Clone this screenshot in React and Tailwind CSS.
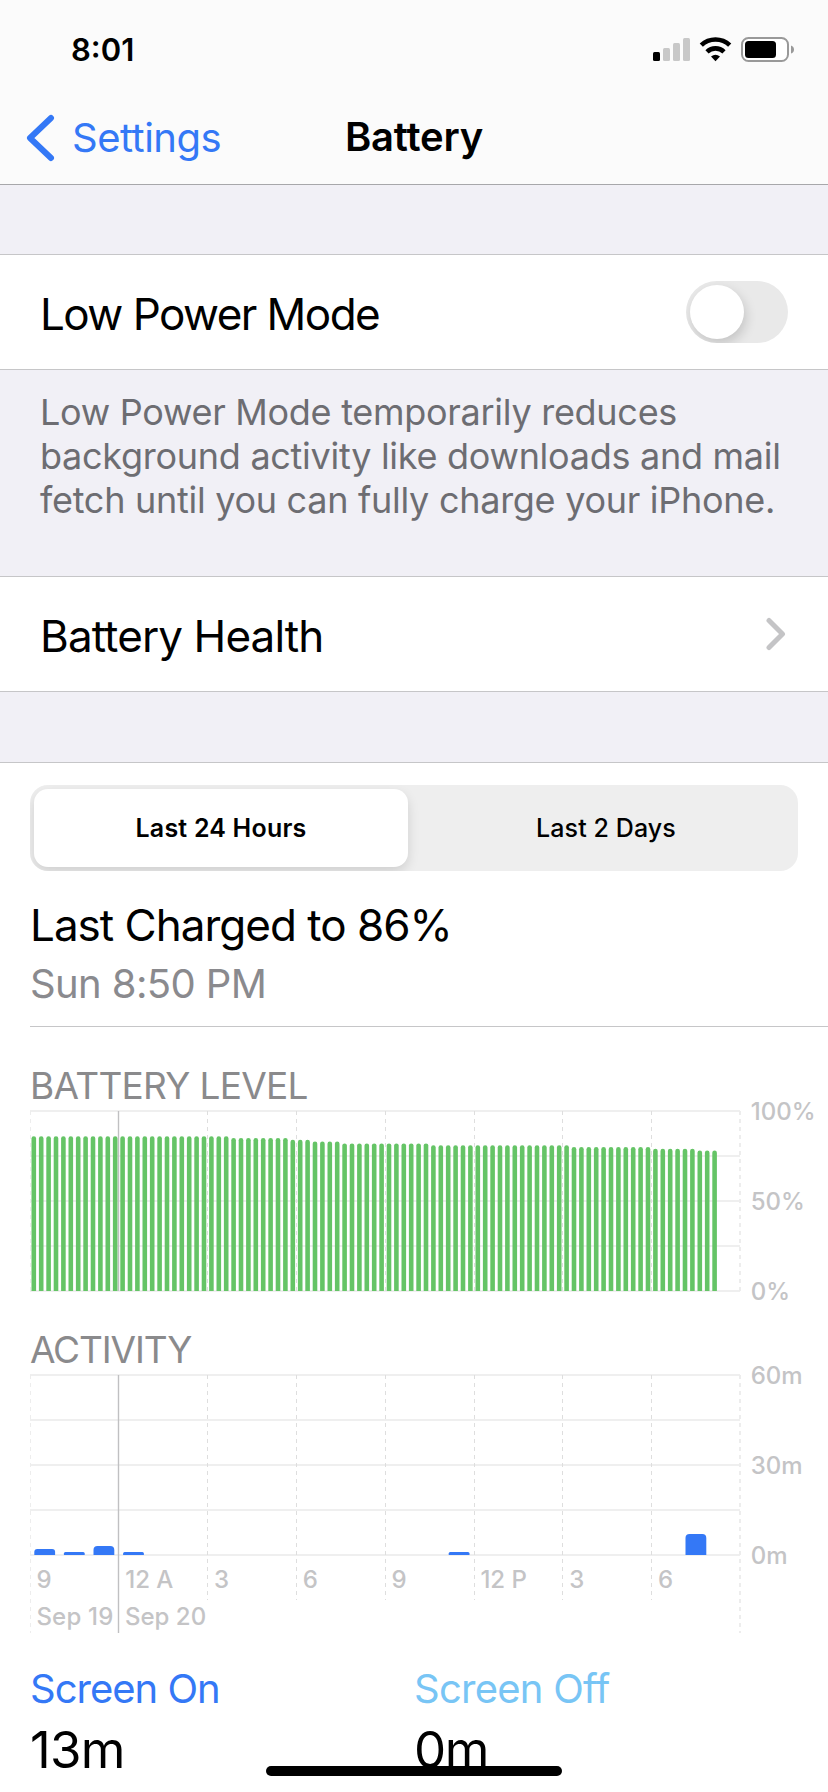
const LEFT = 30
const HOUR3 = 88.8
const BAR_STEP = 7.4

// [level, how many quarter-hour samples in a row]
const levels = [
  [86, 27],
  [85, 8],
  [84, 3],
  [83, 4],
  [82, 12],
  [81, 19],
  [80, 11],
  [79, 6],
  [78, 3],
].flatMap(([level, count]) => Array(count).fill(level))

// minutes of screen time by hour slot
const activity = [
  { hour: 0, minutes: 2 },
  { hour: 1, minutes: 1 },
  { hour: 2, minutes: 3 },
  { hour: 3, minutes: 1 },
  { hour: 14, minutes: 1 },
  { hour: 22, minutes: 7 },
]

const hours = ['9', '12 A', '3', '6', '9', '12 P', '3', '6']

function StatusBar() {
  return (
    <div className="flex h-[92px] items-center justify-between pl-[71px] pr-[33px] pt-2">
      <span className="pb-[2px] text-[31px] font-semibold leading-none">8:01</span>
      <svg width="142" height="28" viewBox="0 0 142 28">
        <rect x="0" y="16" width="7" height="9" rx="1.5" />
        <g fill="#c8c8c8">
          <rect x="10" y="12" width="7" height="13" rx="1.5" />
          <rect x="20" y="7" width="7" height="18" rx="1.5" />
          <rect x="30" y="2" width="7" height="23" rx="1.5" />
        </g>
        <g fill="none" stroke="#000" strokeWidth="4.6">
          <path d="M48.3 9.2 A20.5 20.5 0 0 1 76.7 9.2" />
          <path d="M54 15.8 A12.3 12.3 0 0 1 71 15.8" />
        </g>
        <path d="M58 20.6 Q62.5 16.8 67 20.6 L62.5 25.2 Z" />
        <rect x="89" y="2" width="46" height="23" rx="6.5" fill="#fff" stroke="#999" strokeWidth="2" />
        <rect x="92" y="5" width="31" height="17" rx="3.5" />
        <path d="M138 9.5 Q141 10.5 141 13.5 Q141 16.5 138 17.5 Z" fill="#999" />
      </svg>
    </div>
  )
}

function Header() {
  return (
    <header className="h-[185px] border-b border-[#a7a7aa] bg-[#fbfbfb]">
      <StatusBar />
      <div className="grid h-[92px] grid-cols-3 items-center">
        <div className="flex items-center gap-[17px] pl-[26px] text-[#3478f6]">
          <svg width="29" height="48" viewBox="0 0 29 48" fill="none" stroke="currentColor" strokeWidth="6" strokeLinecap="round" strokeLinejoin="round">
            <path d="M25 4 L4 24 L25 44" />
          </svg>
          <span className="text-[40px] leading-none tracking-[-0.5px]">Settings</span>
        </div>
        <h1 className="pb-[2px] text-center text-[40px] font-semibold leading-none tracking-[-0.2px]">Battery</h1>
      </div>
    </header>
  )
}

function Row({ label, tracking, children }) {
  return (
    <div className="flex h-[116px] items-center justify-between border-y border-[#c6c6c8] bg-white pl-10 pr-10">
      <span className={`pt-[3px] text-[44px] leading-none ${tracking}`}>{label}</span>
      {children}
    </div>
  )
}

function Toggle() {
  return (
    <div className="flex h-[62px] w-[102px] overflow-hidden rounded-full bg-[#e9e9e9] p-1">
      <div className="size-[54px] rounded-full bg-white shadow-[2px_5px_12px_rgba(0,0,0,0.16)]" />
    </div>
  )
}

function Segments() {
  return (
    <div className="flex h-[86px] overflow-hidden rounded-[18px] bg-[#eeeeee] p-1 text-[25px]">
      <div className="flex w-[374px] items-center justify-center rounded-[14px] bg-white pt-[2px] font-semibold tracking-[0.2px] shadow-[0_5px_12px_rgba(0,0,0,0.13)]">
        Last 24 Hours
      </div>
      <div className="flex flex-1 items-center justify-center pl-[10px] pt-[2px] font-medium tracking-[0.1px]">Last 2 Days</div>
    </div>
  )
}

// Horizontal rules plus the dashed three-hour markers
function Grid({ tall }) {
  return (
    <g fill="none">
      {[0, 45, 90, 135, 180].map((y) => (
        <path key={y} d={`M30 ${y + 11} H740`} stroke="#efefef" strokeWidth="2" />
      ))}
      {[0, 1, 2, 3, 4, 5, 6, 7, 8].map((i) => {
        const x = i === 8 ? 740 : Math.floor(LEFT + i * HOUR3) + 0.5
        const bottom = !tall ? 191 : i === 0 || i === 8 ? 269 : 236
        return (
          <path
            key={i}
            d={`M${x} 11 V${bottom}`}
            stroke={i === 0 || i === 8 ? '#ededed' : '#dedede'}
            strokeWidth={i === 8 ? 2 : 1}
            strokeDasharray="4 4"
          />
        )
      })}
      <path d={`M118.5 11 V${tall ? 269 : 191}`} stroke="#c0c0c2" strokeWidth="1.4" />
    </g>
  )
}

function AxisLabels({ labels }) {
  return labels.map((label, i) => (
    <text key={label} x="750.7" y={20.3 + i * 90}>
      {label}
    </text>
  ))
}

function BatteryChart() {
  return (
    <svg className="block overflow-visible" width="828" height="200" viewBox="0 0 828 200" fill="#c4c4c6" fontSize="24" fontWeight="500">
      <Grid />
      {levels.map((level, i) => {
        const x = LEFT + 1.5 + i * BAR_STEP
        const top = 191 - level * 1.8
        return (
          <path
            key={i}
            d={`M${x} 191 V${top + 2.2} a2.3 2.2 0 0 1 4.6 0 V191 Z`}
            fill="#65c466"
          />
        )
      })}
      <AxisLabels labels={['100%', '50%', '0%']} />
    </svg>
  )
}

function ActivityChart() {
  return (
    <svg className="block overflow-visible" width="828" height="272" viewBox="0 0 828 272" fill="#c4c4c6" fontSize="24" fontWeight="500">
      <Grid tall />
      {activity.map(({ hour, minutes }) => {
        const x = LEFT + 4.3 + hour * 29.6
        const h = minutes * 3
        const r = Math.min(4, h / 2)
        return (
          <path
            key={hour}
            d={`M${x} 191 v${r - h} q0 ${-r} ${r} ${-r} h${20.8 - 2 * r} q${r} 0 ${r} ${r} v${h - r} Z`}
            fill="#3478f6"
          />
        )
      })}
      {hours.map((hour, i) => (
        <text key={i} x={36.4 + i * HOUR3} y="224">
          {hour}
        </text>
      ))}
      <text x="36.4" y="260.5" letterSpacing="0.2">Sep 19</text>
      <text x="125" y="260.5">Sep 20</text>
      <AxisLabels labels={['60m', '30m', '0m']} />
    </svg>
  )
}

function Usage() {
  return (
    <div className="grid grid-cols-[384px_1fr] pl-[30px]">
      <div>
        <p className="text-[40px] leading-[48px] tracking-[-1px] text-[#3478f6]">Screen On</p>
        <p className="mt-[9px] text-[51px] leading-[56px] tracking-[-0.7px]">13m</p>
      </div>
      <div>
        <p className="text-[40px] leading-[48px] tracking-[-0.75px] text-[#78c5f5]">Screen Off</p>
        <p className="mt-[9px] text-[51px] leading-[56px] tracking-[-1.5px]">0m</p>
      </div>
    </div>
  )
}

export default function App() {
  return (
    <div className="relative h-[1792px] w-[828px] overflow-hidden bg-[#f1f0f6] font-[Inter,sans-serif] text-black">
      <Header />
      <main>
        <section className="pt-[69px]">
          <Row label="Low Power Mode" tracking="tracking-[-1.55px]">
            <Toggle />
          </Row>
          <p className="h-[206px] whitespace-nowrap pl-10 pt-5 text-[36px] leading-[44px] tracking-[-0.28px] text-[#6d6d72]">
            Low Power Mode temporarily reduces
            <br />
            background activity like downloads and mail
            <br />
            fetch until you can fully charge your iPhone.
          </p>
        </section>
        <Row label="Battery Health" tracking="tracking-[-0.9px]">
          <svg className="mr-[2px]" width="20" height="34" viewBox="0 0 20 34" fill="none" stroke="#c4c4c6" strokeWidth="5" strokeLinecap="round" strokeLinejoin="round">
            <path d="M3 3.5 L16.5 17 L3 30.5" />
          </svg>
        </Row>
        <section className="mt-[70px] h-[1030px] border-t border-[#c6c6c8] bg-white pt-[22px]">
          <div className="px-[30px]">
            <Segments />
          </div>
          <div className="ml-[30px] h-[156px] border-b border-[#c6c6c8] pt-[28px]">
            <p className="text-[44px] leading-[52px] tracking-[-1px]">Last Charged to 86%</p>
            <p className="mt-[9px] text-[40px] leading-[48px] tracking-[-0.6px] text-[#8a8a8e]">Sun 8:50 PM</p>
          </div>
          <h2 className="mt-[37px] pl-[30px] text-[37px] leading-[44px] tracking-[-0.7px] text-[#8a8a8c]">BATTERY LEVEL</h2>
          <div className="-mt-[8px]">
            <BatteryChart />
          </div>
          <h2 className="mt-[28px] pl-[30px] text-[37px] leading-[44px] tracking-[-1.15px] text-[#8a8a8c]">ACTIVITY</h2>
          <div className="-mt-[8px]">
            <ActivityChart />
          </div>
          <div className="mt-[29px]">
            <Usage />
          </div>
        </section>
      </main>
      <div className="absolute left-[266px] top-[1766px] h-[10px] w-[296px] rounded-full bg-black" />
    </div>
  )
}
